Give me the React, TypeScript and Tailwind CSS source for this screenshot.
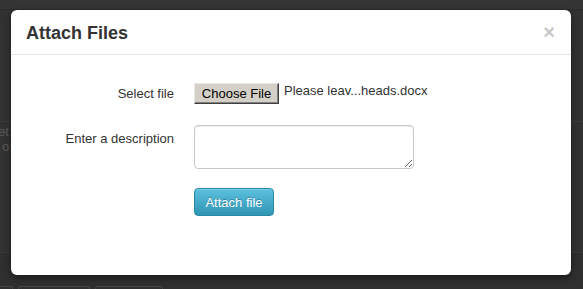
import React from "react";

export default function App() {
  return (
    <div
      className="relative w-[583px] h-[289px] overflow-hidden bg-[#323232]"
      style={{ fontFamily: '"Liberation Sans", Arial, sans-serif' }}
    >
      {/* faint background page behind the backdrop */}
      <div className="flex flex-col w-full h-full">
        <div className="h-[10px] border-b border-[#2a2a2a] bg-[#353535]" />
        <div className="h-[112px] border-b border-[#3c3c3c]" />
        <div className="pl-0 pt-[2px] text-[13px] leading-[15px] text-[#5a5a5a]">
          <div className="-ml-[2px]">et</div>
          <div className="ml-[2px]">o</div>
        </div>
        <div className="flex-1" />
        <div className="h-[37px] border-t border-[#3a3a3a] bg-[#2f2f2f] flex items-end gap-[5px] pl-0">
          <div className="w-[13px] h-[3px] border-t border-r border-[#444] rounded-tr" />
          <div className="w-[72px] h-[3px] border-t border-x border-[#444] rounded-t" />
          <div className="w-[68px] h-[3px] border-t border-x border-[#444] rounded-t" />
        </div>
      </div>

      {/* modal */}
      <div className="absolute left-[11px] top-[10px] w-[560px] h-[265px] bg-white rounded-[6px] shadow-[0_3px_7px_rgba(0,0,0,0.45)] flex flex-col">
        <div className="h-[45px] border-b border-[#e5e5e5] flex items-center justify-between pl-[15px] pr-[16px]">
          <h3 className="text-[18px] font-bold leading-[27px] text-[#333] pt-[3px]">
            Attach Files
          </h3>
          <span className="text-[20px] font-bold leading-[20px] text-[#c8c8c8] -mt-[1px]">
            ×
          </span>
        </div>

        <div className="flex flex-col pt-[28px] text-[13px] text-[#333]">
          <div className="flex items-center gap-[20px] h-[21px]">
            <label className="w-[163px] text-right leading-[20px] pt-[1px]">Select file</label>
            <div className="flex items-start">
              <button className="h-[21px] w-[85px] bg-[#d4d0c8] border border-t-[#e8e6e1] border-l-[#e8e6e1] border-r-[#404040] border-b-[#404040] text-[13px] leading-[18px] text-black shadow-[inset_-1px_-1px_0_#808080] pt-[1px]">
                Choose File
              </button>
              <span className="ml-[5px] -mt-[1px] leading-[18px] text-[#333]">
                Please leav...heads.docx
              </span>
            </div>
          </div>

          <div className="flex items-start gap-[20px] mt-[21px]">
            <label className="w-[163px] text-right leading-[20px] pt-[4px]">
              Enter a description
            </label>
            <textarea className="w-[220px] h-[44px] border border-[#c8c8c8] rounded-[4px] shadow-[inset_0_1px_1px_rgba(0,0,0,0.075)] outline-none resize" />
          </div>

          <div className="flex gap-[20px] mt-[19px]">
            <div className="w-[163px]" />
            <button
              className="h-[28px] w-[80px] rounded-[4px] border border-[#2a8aa6] bg-gradient-to-b from-[#5bc0de] to-[#2f96b4] text-white text-[13px] leading-[20px] pt-[1px] shadow-[inset_0_1px_0_rgba(255,255,255,0.2)]"
              style={{ textShadow: "0 -1px 0 rgba(0,0,0,0.25)" }}
            >
              Attach file
            </button>
          </div>
        </div>
      </div>
    </div>
  );
}
